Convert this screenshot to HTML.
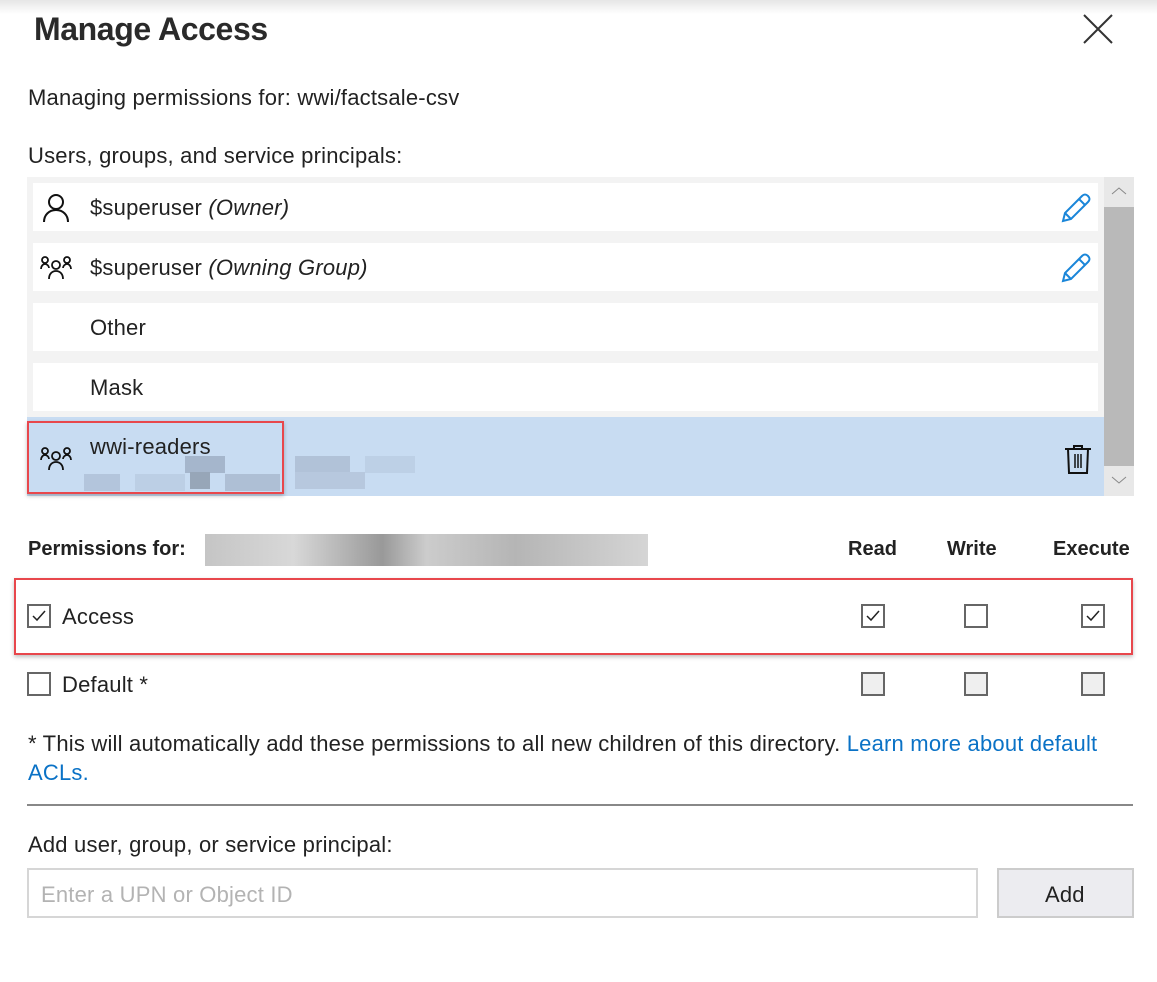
<!DOCTYPE html>
<html><head><meta charset="utf-8"><style>
*{box-sizing:border-box;margin:0;padding:0}
body{width:1157px;height:982px;background:#fff;font-family:"Liberation Sans",sans-serif;color:#222;position:relative;overflow:hidden}
.a{position:absolute;white-space:nowrap}
.t{font-size:22px;letter-spacing:0.2px}
.row{position:absolute;left:33px;width:1065px;height:48px;background:#fff}
.row span{position:absolute;left:57px;top:12px;font-size:22px;letter-spacing:0.2px}
.cb{position:absolute;width:24px;height:24px;border:2px solid #666;background:#fff}
.cb.g{background:#efefef}
.px{position:absolute;height:17px}
</style></head><body>
<div class="a" style="left:0;top:0;width:1157px;height:14px;background:linear-gradient(#e6e6e6,#fff)"></div>
<div class="a" style="left:34px;top:11px;font-size:32px;font-weight:bold;color:#2a2a2a;letter-spacing:-0.4px">Manage Access</div>
<svg class="a" style="left:1082px;top:13px" width="32" height="32"><path d="M2 2L30 30M30 2L2 30" stroke="#333" stroke-width="2"/></svg>
<div class="a t" style="left:28px;top:85px">Managing permissions for: wwi/factsale-csv</div>
<div class="a t" style="left:28px;top:143px">Users, groups, and service principals:</div>
<div class="a" style="left:27px;top:177px;width:1077px;height:319px;background:#f3f3f3"></div>
<div class="a" style="left:1104px;top:177px;width:30px;height:319px;background:#e8e8e8"></div>
<div class="a" style="left:1104px;top:207px;width:30px;height:259px;background:#b9b9b9"></div>
<svg class="a" style="left:1110px;top:185px" width="18" height="12"><path d="M2 9L9 3L16 9" stroke="#888" fill="none"/></svg>
<svg class="a" style="left:1110px;top:474px" width="18" height="12"><path d="M2 3L9 9L16 3" stroke="#888" fill="none"/></svg>
<div class="row" style="top:183px"><span>$superuser <i>(Owner)</i></span></div>
<div class="row" style="top:243px"><span>$superuser <i>(Owning Group)</i></span></div>
<div class="row" style="top:303px"><span>Other</span></div>
<div class="row" style="top:363px"><span>Mask</span></div>
<div class="a" style="left:27px;top:417px;width:1077px;height:79px;background:#c8dcf2"></div>
<svg class="a" style="left:42px;top:193px" width="28" height="30"><circle cx="14" cy="9" r="7" stroke="#111" stroke-width="2" fill="none"/><path d="M2 29c0-7 5-12 12-12s12 5 12 12" stroke="#111" stroke-width="2" fill="none"/></svg>
<svg class="a" style="left:40px;top:255px" width="32" height="26"><g stroke="#111" stroke-width="1.8" fill="none"><circle cx="5" cy="5" r="3"/><circle cx="27" cy="5" r="3"/><circle cx="16" cy="10" r="4"/><path d="M1 14c0-3 2-5 4-5s4 2 4 4M31 14c0-3-2-5-4-5s-4 2-4 4M9 24c0-5 3-8 7-8s7 3 7 8"/></g></svg>
<svg class="a" style="left:40px;top:446px" width="32" height="26"><g stroke="#111" stroke-width="1.8" fill="none"><circle cx="5" cy="5" r="3"/><circle cx="27" cy="5" r="3"/><circle cx="16" cy="10" r="4"/><path d="M1 14c0-3 2-5 4-5s4 2 4 4M31 14c0-3-2-5-4-5s-4 2-4 4M9 24c0-5 3-8 7-8s7 3 7 8"/></g></svg>
<svg class="a" style="left:1060px;top:192px" width="32" height="32"><g stroke="#1a86d9" stroke-width="2" fill="none"><path d="M3 29L5 21L22 4Q25 1 28 4Q31 7 28 10L11 27Z"/><path d="M5 21L11 27M19 7L25 13"/></g></svg>
<svg class="a" style="left:1060px;top:252px" width="32" height="32"><g stroke="#1a86d9" stroke-width="2" fill="none"><path d="M3 29L5 21L22 4Q25 1 28 4Q31 7 28 10L11 27Z"/><path d="M5 21L11 27M19 7L25 13"/></g></svg>
<svg class="a" style="left:1064px;top:444px" width="28" height="32"><g stroke="#111" stroke-width="2" fill="none"><path d="M1 5H27M10 5V2H18V5M4 5L5 29H23L24 5"/><path d="M11 10V24M14 10V24M17 10V24" stroke-width="1.5"/></g></svg>
<div class="a t" style="left:90px;top:434px">wwi-readers</div>
<div class="px" style="left:84px;top:474px;width:36px;background:#b3c5dc"></div>
<div class="px" style="left:135px;top:474px;width:50px;background:#bccfe5"></div>
<div class="px" style="left:185px;top:456px;width:40px;background:#a5b6cc"></div>
<div class="px" style="left:190px;top:472px;width:20px;background:#97a6b8"></div>
<div class="px" style="left:225px;top:474px;width:55px;background:#aebfd5"></div>
<div class="px" style="left:295px;top:456px;width:55px;background:#b1c2d8"></div>
<div class="px" style="left:295px;top:472px;width:70px;background:#b7c8de"></div>
<div class="px" style="left:365px;top:456px;width:50px;background:#bdd0e6"></div>
<div class="a" style="left:27px;top:421px;width:257px;height:73px;border:2.5px solid #e8474c;box-shadow:0 2px 4px rgba(0,0,0,.25)"></div>
<div class="a" style="left:28px;top:538px;font-size:20px;font-weight:bold">Permissions for: </div>
<div class="a" style="left:205px;top:534px;width:443px;height:32px;background:linear-gradient(90deg,#c5c5c5,#d8d8d8 20%,#999 40%,#ccc 50%,#b5b5b5 70%,#d5d5d5)"></div>
<div class="a" style="left:848px;top:538px;font-size:20px;font-weight:bold">Read</div>
<div class="a" style="left:947px;top:538px;font-size:20px;font-weight:bold">Write</div>
<div class="a" style="left:1053px;top:538px;font-size:20px;font-weight:bold">Execute</div>
<div class="a" style="left:14px;top:578px;width:1119px;height:77px;border:2.5px solid #e8474c;box-shadow:0 2px 4px rgba(0,0,0,.25)"></div>
<div class="cb" style="left:27px;top:604px"></div><div class="a t" style="left:62px;top:604px">Access</div>
<div class="cb" style="left:861px;top:604px"></div>
<div class="cb" style="left:964px;top:604px"></div>
<div class="cb" style="left:1081px;top:604px"></div>
<svg class="a" style="left:29px;top:606px" width="20" height="20"><path d="M4 10L8 14L16 5" stroke="#222" stroke-width="1.5" fill="none"/></svg>
<svg class="a" style="left:863px;top:606px" width="20" height="20"><path d="M4 10L8 14L16 5" stroke="#222" stroke-width="1.5" fill="none"/></svg>
<svg class="a" style="left:1083px;top:606px" width="20" height="20"><path d="M4 10L8 14L16 5" stroke="#222" stroke-width="1.5" fill="none"/></svg>
<div class="cb" style="left:27px;top:672px"></div><div class="a t" style="left:62px;top:672px">Default *</div>
<div class="cb g" style="left:861px;top:672px"></div>
<div class="cb g" style="left:964px;top:672px"></div>
<div class="cb g" style="left:1081px;top:672px"></div>
<div class="a t" style="left:28px;top:731px">* This will automatically add these permissions to all new children of this directory. <span style="color:#0a72c6">Learn more about default</span></div>
<div class="a t" style="left:28px;top:760px;color:#0a72c6">ACLs.</div>
<div class="a" style="left:27px;top:804px;width:1106px;height:2px;background:#888"></div>
<div class="a t" style="left:28px;top:832px">Add user, group, or service principal:</div>
<div class="a" style="left:27px;top:868px;width:951px;height:50px;border:2px solid #d6d6d6"></div>
<div class="a t" style="left:41px;top:882px;color:#b3b3b3">Enter a UPN or Object ID</div>
<div class="a" style="left:997px;top:868px;width:137px;height:50px;border:2px solid #ccc;background:#ececf0"></div>
<div class="a t" style="left:1045px;top:882px">Add</div>
</body></html>
